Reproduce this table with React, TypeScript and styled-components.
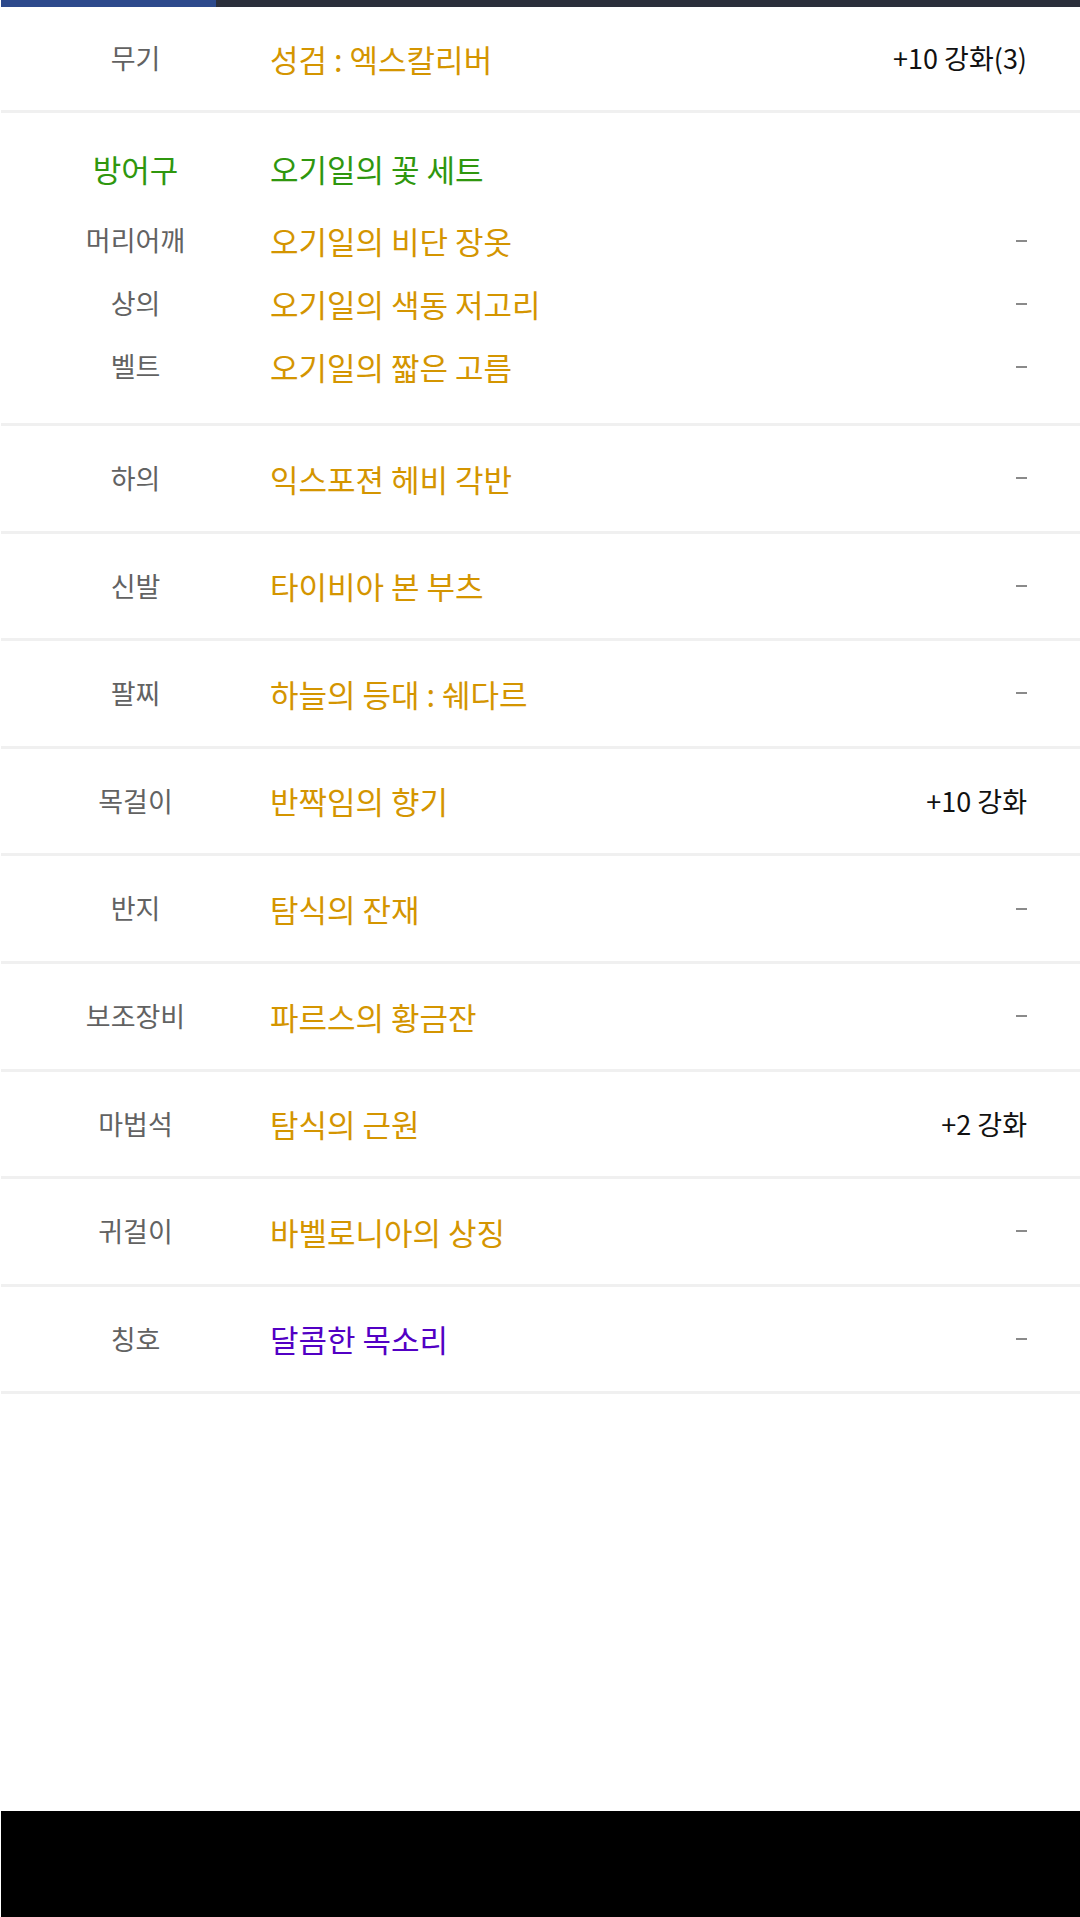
import React from "react";
import styled, { createGlobalStyle } from "styled-components";

const GlobalStyle = createGlobalStyle`
  html, body {
    margin: 0;
    padding: 0;
    background: #ffffff;
  }
  body {
    font-family: "Noto Sans CJK KR", "Noto Sans", sans-serif;
  }
`;

type Tone = "set" | "epic" | "title";

interface Item {
  slot: string;
  name: string;
  tone: Tone;
  extra?: string;
}

const toneColor: Record<Tone, string> = {
  set: "#2f970e",
  epic: "#d49500",
  title: "#5200c4",
};

const Page = styled.div`
  width: 1080px;
  height: 1917px;
  padding-left: 1px;
  box-sizing: border-box;
  display: flex;
  flex-direction: column;
  background: #fff;
`;

const TabBar = styled.div`
  height: 7px;
  background: #2b2f3b;
  display: flex;
  flex-shrink: 0;
`;

const TabIndicator = styled.div`
  width: 215px;
  background: #2d4a8c;
`;

const List = styled.div`
  display: flex;
  flex-direction: column;
  flex: 1;
`;

// one slot line: label | item name | enchant info
const Row = styled.div<{ $h: number }>`
  height: ${(p) => p.$h}px;
  display: grid;
  grid-template-columns: 269px 1fr auto;
  align-items: center;
  padding-right: 53px;
  border-bottom: 3px solid #f0f0f0;
  flex-shrink: 0;
`;

const Group = styled.div`
  display: flex;
  flex-direction: column;
  padding: 16px 53px 25px 0;
  border-bottom: 3px solid #f0f0f0;
  flex-shrink: 0;
`;

const GroupRow = styled.div<{ $h: number }>`
  height: ${(p) => p.$h}px;
  display: grid;
  grid-template-columns: 269px 1fr auto;
  align-items: center;
`;

const Slot = styled.div<{ $color?: string; $big?: boolean }>`
  text-align: center;
  font-size: ${(p) => (p.$big ? 31 : 27)}px;
  line-height: 1.2;
  color: ${(p) => p.$color || "#626262"};
`;

const Name = styled.div<{ $color: string }>`
  font-size: 31px;
  line-height: 1.2;
  color: ${(p) => p.$color};
`;

const Extra = styled.div`
  font-size: 27px;
  line-height: 1.2;
  color: #111;
  text-align: right;
`;

const Dash = styled.div`
  width: 11px;
  height: 2px;
  background: #8a8a8a;
  justify-self: end;
`;

const Footer = styled.div`
  height: 106px;
  background: #000;
  flex-shrink: 0;
`;

const armorSet = { slot: "방어구", name: "오기일의 꽃 세트" };

const armorParts: Item[] = [
  { slot: "머리어깨", name: "오기일의 비단 장옷", tone: "epic" },
  { slot: "상의", name: "오기일의 색동 저고리", tone: "epic" },
  { slot: "벨트", name: "오기일의 짧은 고름", tone: "epic" },
];

const items: Item[] = [
  { slot: "하의", name: "익스포젼 헤비 각반", tone: "epic" },
  { slot: "신발", name: "타이비아 본 부츠", tone: "epic" },
  { slot: "팔찌", name: "하늘의 등대 : 쉐다르", tone: "epic" },
  { slot: "목걸이", name: "반짝임의 향기", tone: "epic", extra: "+10 강화" },
  { slot: "반지", name: "탐식의 잔재", tone: "epic" },
  { slot: "보조장비", name: "파르스의 황금잔", tone: "epic" },
  { slot: "마법석", name: "탐식의 근원", tone: "epic", extra: "+2 강화" },
  { slot: "귀걸이", name: "바벨로니아의 상징", tone: "epic" },
  { slot: "칭호", name: "달콤한 목소리", tone: "title" },
];

const Trailing = ({ extra }: { extra?: string }) =>
  extra ? <Extra>{extra}</Extra> : <Dash aria-label="-" />;

export default function App() {
  return (
    <Page>
      <GlobalStyle />
      <TabBar>
        <TabIndicator />
      </TabBar>
      <List>
        <Row $h={103}>
          <Slot>무기</Slot>
          <Name $color={toneColor.epic}>성검 : 엑스칼리버</Name>
          <Extra>+10 강화(3)</Extra>
        </Row>

        <Group>
          <GroupRow $h={80}>
            <Slot $big $color={toneColor.set}>
              {armorSet.slot}
            </Slot>
            <Name $color={toneColor.set}>{armorSet.name}</Name>
            <span />
          </GroupRow>
          {armorParts.map((p) => (
            <GroupRow $h={63} key={p.slot}>
              <Slot>{p.slot}</Slot>
              <Name $color={toneColor[p.tone]}>{p.name}</Name>
              <Trailing extra={p.extra} />
            </GroupRow>
          ))}
        </Group>

        {items.map((it) => (
          <Row $h={104.6} key={it.slot}>
            <Slot>{it.slot}</Slot>
            <Name $color={toneColor[it.tone]}>{it.name}</Name>
            <Trailing extra={it.extra} />
          </Row>
        ))}
      </List>
      <Footer />
    </Page>
  );
}
